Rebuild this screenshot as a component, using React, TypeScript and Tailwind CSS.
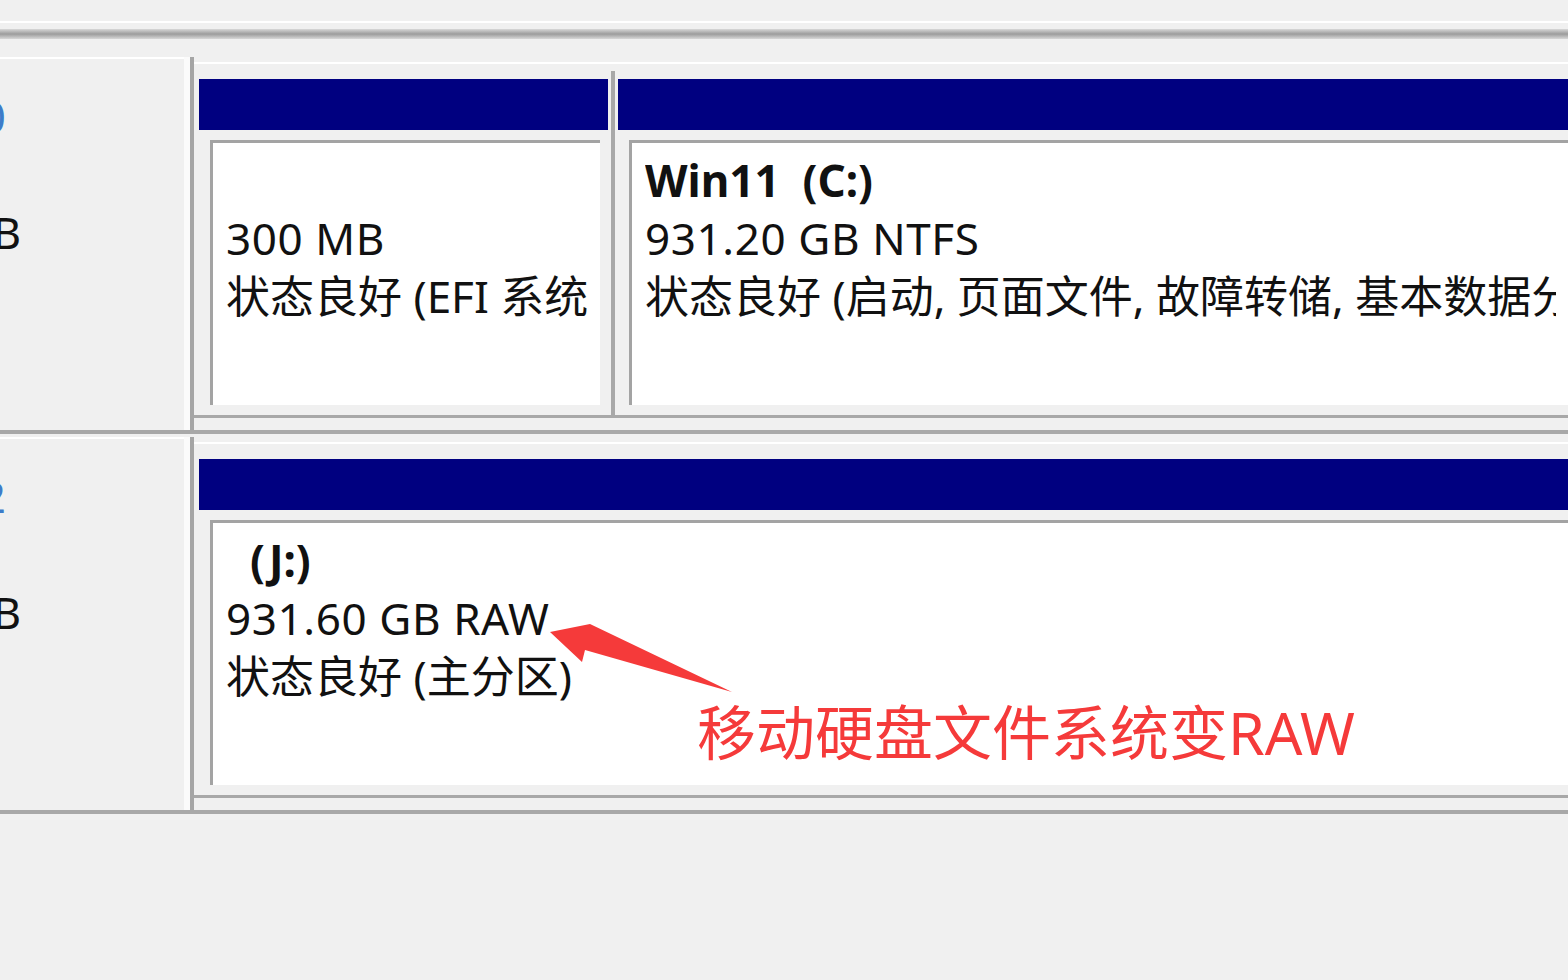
import React from 'react';

const FONT = "font-['Noto_Sans','Noto_Sans_CJK_SC',sans-serif]";

interface PartitionProps {
  name?: string;
  nameIndent?: boolean;
  size: string;
  status: string;
  grow?: boolean;
}

// one partition block: blue header bar + sunken white box with three text lines
function Partition({ name, nameIndent, size, status, grow }: PartitionProps) {
  return (
    <div className={`flex flex-col pt-[4px] pb-[10px] ${grow ? 'flex-1 min-w-0' : 'w-[409px]'}`}>
      <div className="h-[51px] bg-[#000080]" />
      <div className="h-[10px]" />
      <div className={`flex-1 flex pl-[11px] ${grow ? '' : 'pr-[8px]'}`}>
        <div className="flex-1 min-w-0 bg-white border-t-[3px] border-l-[3px] border-[#a3a3a3] pt-[8px] pl-[13px] pr-[12px]">
          <div className="overflow-hidden whitespace-pre text-[44px] leading-[58px] text-[#111]">
            <div className="h-[58px] font-bold">
              {name ? <span className={nameIndent ? 'ml-[24px]' : ''}>{name}</span> : null}
            </div>
            <div className="h-[58px] tracking-[0.6px]">{size}</div>
            <div className="h-[58px]">{status}</div>
          </div>
        </div>
      </div>
    </div>
  );
}

interface LeftLine {
  text: string;
  reach: string;
  blue?: boolean;
}

// left disk label panel: only the tail ends of the labels show on screen
function DiskLabel({ lines }: { lines: LeftLine[] }) {
  return (
    <div className="w-[184px] border-t-2 border-white pt-[28px] text-[44px] leading-[58px]">
      {lines.map((l) => (
        <div
          key={l.text}
          className={`flex h-[58px] justify-end whitespace-nowrap ${l.reach} ${l.blue ? 'text-[#3d7cc9]' : 'text-[#111]'}`}
        >
          {l.text}
        </div>
      ))}
    </div>
  );
}

function DiskRow({ lines, children }: { lines: LeftLine[]; children: React.ReactNode }) {
  return (
    <div className="flex flex-col h-[380px]">
      <div className="flex h-[373px]">
        <DiskLabel lines={lines} />
        <div className="w-[6px] bg-[#fbfbfb]" />
        <div className="w-[4px] bg-[#a5a5a5]" />
        <div className="flex-1 min-w-0 flex flex-col">
          <div className="h-[5px]" />
          <div className="h-[2px] bg-white" />
          <div className="h-[11px]" />
          <div className="flex h-[340px] pl-[5px]">{children}</div>
          <div className="h-[3px] bg-[#a8a8a8]" />
          <div className="flex-1" />
        </div>
      </div>
      <div className="h-[4px] bg-[#a8a8a8]" />
    </div>
  );
}

export default function App() {
  return (
    <div className={`relative w-[1568px] h-[980px] overflow-hidden bg-[#f0f0f0] ${FONT}`}>
      {/* top splitter */}
      <div className="h-[21px]" />
      <div className="h-[2px] bg-white" />
      <div className="h-[6px]" />
      <div className="h-[10px] bg-gradient-to-b from-[#d8d8d8] via-[#9c9c9c] to-[#d8d8d8]" />
      <div className="h-[18px]" />

      <DiskRow
        lines={[
          { text: '磁盘 0', reach: 'w-[6px]', blue: true },
          { text: '基本', reach: 'w-0' },
          { text: '931.51 GB', reach: 'w-[21px]' },
          { text: '联机', reach: 'w-0' },
        ]}
      >
        <Partition size="300 MB" status="状态良好 (EFI 系统分区)" />
        <div className="w-[10px] flex justify-center -mt-[4px]">
          <div className="w-[4px] bg-[#a8a8a8]" />
        </div>
        <Partition
          grow
          name="Win11  (C:)"
          size="931.20 GB NTFS"
          status="状态良好 (启动, 页面文件, 故障转储, 基本数据分区)"
        />
      </DiskRow>

      <DiskRow
        lines={[
          { text: '磁盘 2', reach: 'w-[6px]', blue: true },
          { text: '基本', reach: 'w-0' },
          { text: '931.60 GB', reach: 'w-[21px]' },
          { text: '联机', reach: 'w-0' },
        ]}
      >
        <Partition grow nameIndent name="(J:)" size="931.60 GB RAW" status="状态良好 (主分区)" />
      </DiskRow>

      {/* red annotation laid over the screenshot */}
      <svg className="absolute left-[540px] top-[615px]" width="200" height="85" viewBox="0 0 200 85">
        <polygon points="10,17 50,9 192,77 45,35 42,47" fill="#f53a3a" />
      </svg>
      <div className="absolute left-[697px] top-[703px] whitespace-nowrap text-[59px] leading-[59px] text-[#f53a3a]">
        移动硬盘文件系统变RAW
      </div>
    </div>
  );
}
